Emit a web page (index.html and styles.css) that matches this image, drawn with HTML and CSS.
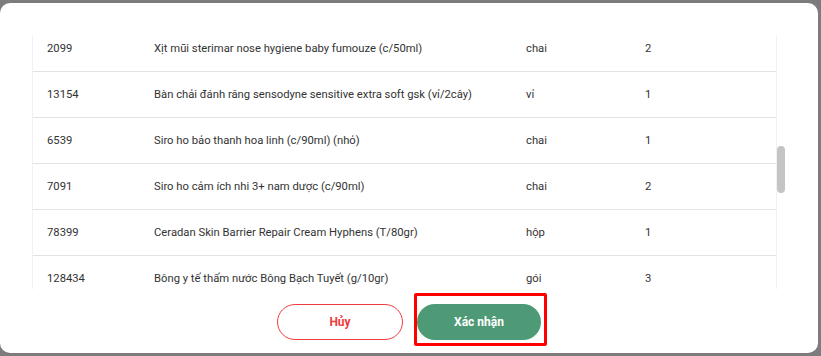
FILE: index.html
```html
<html>
<head>
  <meta name="viewport" content="width=device-width, initial-scale=1.0">
  <link rel="stylesheet" href="styles.css">
</head>
<body>
  <!-- hộp thoại xác nhận đơn hàng -->
  <div class="modal">
    <div class="list-wrap">
      <div class="list" id="list">
        <div class="rows">
          <div class="row">
            <div class="cell">2099</div>
            <div class="cell">Xịt mũi sterimar nose hygiene baby fumouze (c/50ml)</div>
            <div class="cell">chai</div>
            <div class="cell">2</div>
          </div>
          <div class="row">
            <div class="cell">13154</div>
            <div class="cell">Bàn chải đánh răng sensodyne sensitive extra soft gsk (vỉ/2cây)</div>
            <div class="cell">vỉ</div>
            <div class="cell">1</div>
          </div>
          <div class="row">
            <div class="cell">6539</div>
            <div class="cell">Siro ho bảo thanh hoa linh (c/90ml) (nhỏ)</div>
            <div class="cell">chai</div>
            <div class="cell">1</div>
          </div>
          <div class="row">
            <div class="cell">7091</div>
            <div class="cell">Siro ho cảm ích nhi 3+ nam dược (c/90ml)</div>
            <div class="cell">chai</div>
            <div class="cell">2</div>
          </div>
          <div class="row">
            <div class="cell">78399</div>
            <div class="cell">Ceradan Skin Barrier Repair Cream Hyphens (T/80gr)</div>
            <div class="cell">hộp</div>
            <div class="cell">1</div>
          </div>
          <div class="row">
            <div class="cell">128434</div>
            <div class="cell">Bông y tế thấm nước Bông Bạch Tuyết (g/10gr)</div>
            <div class="cell">gói</div>
            <div class="cell">3</div>
          </div>
        </div>
      </div>
      <!-- thanh cuộn -->
      <div class="thumb"></div>
    </div>

    <!-- nút hành động -->
    <div class="actions">
      <button class="btn btn-cancel">Hủy</button>
      <span class="mark">
        <button class="btn btn-ok">Xác nhận</button>
      </span>
    </div>
  </div>

  <script src="script.js"></script>
</body>
</html>
```

FILE: styles.css
```css
/* nền mờ phía sau hộp thoại */
body {
  margin: 0;
  padding-top: 3px;
  background: #7c7c7c;
  font-family: Roboto, "Liberation Sans", sans-serif;
  overflow: hidden;
}

/* hộp thoại */
.modal {
  width: 818px;
  height: 350px;
  background: #fff;
  border-radius: 10px;
  padding: 32px 0 0 32px;
  box-sizing: border-box;
  display: flex;
  flex-direction: column;
}

/* vùng cuộn danh sách */
.list-wrap {
  position: relative;
  width: 753px;
  height: 254px;
  flex-shrink: 0;
}
.list {
  width: 745px;
  height: 254px;
  overflow: hidden;
}
.thumb {
  position: absolute;
  right: 0;
  top: 111px;
  width: 8px;
  height: 47px;
  background: #c4c4c4;
  border-radius: 4px;
}

/* khoảng trống trên/dưới thay cho các dòng đã cuộn qua */
.rows {
  padding: 590px 0 506px;
  border-left: 1px solid #f1f1f1;
  border-right: 1px solid #f1f1f1;
}

.row {
  display: grid;
  grid-template-columns: 107px 372px 119px 1fr;
  height: 45px;
  align-items: center;
  border-bottom: 1px solid #e3e3e3;
}

.cell {
  padding-left: 14px;
  font-size: 11.25px;
  color: #333;
  white-space: nowrap;
}

/* các nút */
.actions {
  display: flex;
  justify-content: center;
  gap: 14px;
  padding-top: 15px;
  padding-right: 32px;
}

.btn {
  width: 126px;
  height: 36px;
  border-radius: 18px;
  font-family: Roboto, "Liberation Sans", sans-serif;
  font-size: 12px;
  font-weight: bold;
  cursor: pointer;
}

.btn-cancel {
  background: #fff;
  border: 1px solid #f03c3c;
  color: #f03c3c;
}

.btn-ok {
  display: block;
  width: 124px;
  background: #4f9a76;
  border: none;
  color: #fff;
}

/* khung đỏ đánh dấu */
.mark {
  position: relative;
}
.mark::after {
  content: "";
  position: absolute;
  top: -11px;
  left: -3px;
  right: -6px;
  bottom: -6px;
  border: 3px solid #ff0000;
  border-radius: 2px;
}
```

FILE: script.js
```js
// cuộn danh sách tới giữa như ảnh chụp
document.getElementById("list").scrollTop = 599;
```
